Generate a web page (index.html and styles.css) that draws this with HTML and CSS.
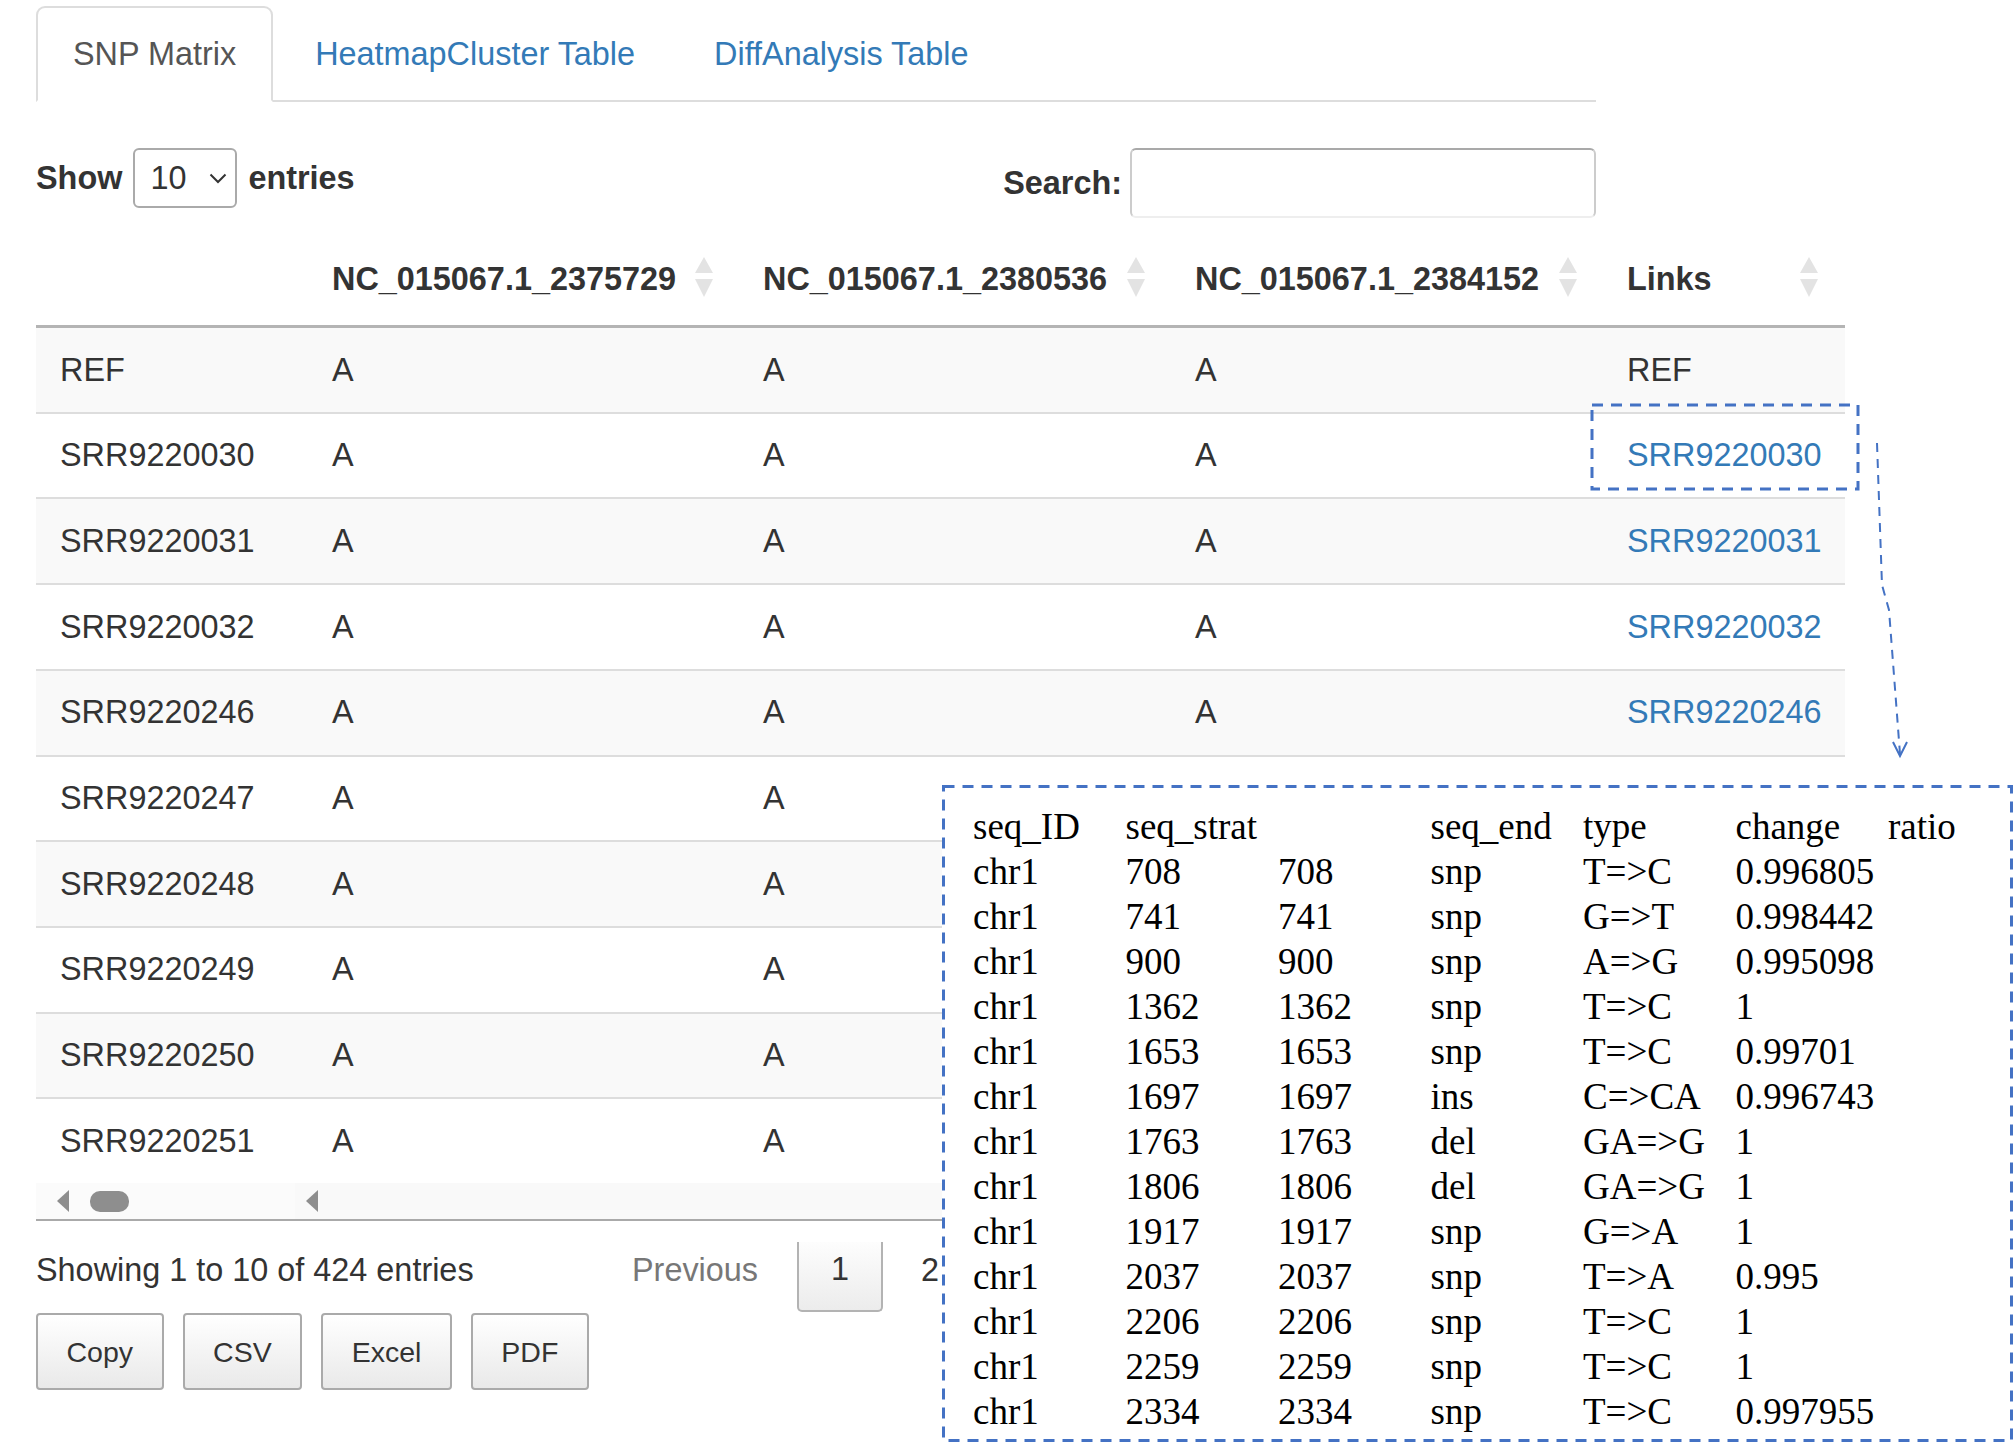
FILE: index.html
```html
<!DOCTYPE html>
<html lang="en">
<head>
<meta charset="utf-8">
<title>SNP Matrix</title>
<link rel="stylesheet" href="styles.css">
</head>
<body>
<div class="page">
  <ul class="nav-tabs">
    <li class="active"><a href="#">SNP Matrix</a></li>
    <li><a href="#">HeatmapCluster Table</a></li>
    <li><a href="#">DiffAnalysis Table</a></li>
  </ul>

  <div class="dt-top">
    <label class="dt-length">Show
      <span class="select"><span>10</span>
        <svg class="chev" width="18" height="11" viewBox="0 0 18 11"><path d="M1.5 1.5 L9 9 L16.5 1.5" fill="none" stroke="#333" stroke-width="2"/></svg>
      </span>
      entries</label>
    <label class="dt-filter">Search:<span class="search"></span></label>
  </div>

  <table class="dt">
    <colgroup>
      <col class="c1"><col class="c2"><col class="c3"><col class="c4"><col class="c5">
    </colgroup>
    <thead>
      <tr>
        <th></th>
        <th class="sorting">NC_015067.1_2375729</th>
        <th class="sorting">NC_015067.1_2380536</th>
        <th class="sorting">NC_015067.1_2384152</th>
        <th class="sorting links">Links</th>
      </tr>
    </thead>
    <tbody>
      <tr><td>REF</td><td>A</td><td>A</td><td>A</td><td>REF</td></tr>
      <tr><td>SRR9220030</td><td>A</td><td>A</td><td>A</td><td><a href="#">SRR9220030</a></td></tr>
      <tr><td>SRR9220031</td><td>A</td><td>A</td><td>A</td><td><a href="#">SRR9220031</a></td></tr>
      <tr><td>SRR9220032</td><td>A</td><td>A</td><td>A</td><td><a href="#">SRR9220032</a></td></tr>
      <tr><td>SRR9220246</td><td>A</td><td>A</td><td>A</td><td><a href="#">SRR9220246</a></td></tr>
      <tr><td>SRR9220247</td><td>A</td><td>A</td><td></td><td></td></tr>
      <tr><td>SRR9220248</td><td>A</td><td>A</td><td></td><td></td></tr>
      <tr><td>SRR9220249</td><td>A</td><td>A</td><td></td><td></td></tr>
      <tr><td>SRR9220250</td><td>A</td><td>A</td><td></td><td></td></tr>
      <tr><td>SRR9220251</td><td>A</td><td>A</td><td></td><td></td></tr>
    </tbody>
  </table>

  <div class="scrollbar">
    <div class="sb-fixed"><span class="sb-arrow"></span><span class="sb-thumb"></span></div>
    <div class="sb-main"><span class="sb-arrow"></span></div>
  </div>

  <div class="dt-bottom">
    <div class="info">Showing 1 to 10 of 424 entries</div>
    <div class="paginate">
      <span class="prev">Previous</span>
      <span class="pg-current">1</span>
      <span class="pg">2</span>
    </div>
  </div>

  <div class="dt-buttons">
    <button class="dt-button">Copy</button>
    <button class="dt-button">CSV</button>
    <button class="dt-button">Excel</button>
    <button class="dt-button">PDF</button>
  </div>

  <div class="popup">
    <div class="prow head">
      <span>seq_ID</span><span class="span2">seq_strat</span><span>seq_end</span><span>type</span><span>change</span><span>ratio</span>
    </div>
    <div class="prow"><span>chr1</span><span>708</span><span>708</span><span>snp</span><span>T=&gt;C</span><span>0.996805</span></div>
    <div class="prow"><span>chr1</span><span>741</span><span>741</span><span>snp</span><span>G=&gt;T</span><span>0.998442</span></div>
    <div class="prow"><span>chr1</span><span>900</span><span>900</span><span>snp</span><span>A=&gt;G</span><span>0.995098</span></div>
    <div class="prow"><span>chr1</span><span>1362</span><span>1362</span><span>snp</span><span>T=&gt;C</span><span>1</span></div>
    <div class="prow"><span>chr1</span><span>1653</span><span>1653</span><span>snp</span><span>T=&gt;C</span><span>0.99701</span></div>
    <div class="prow"><span>chr1</span><span>1697</span><span>1697</span><span>ins</span><span>C=&gt;CA</span><span>0.996743</span></div>
    <div class="prow"><span>chr1</span><span>1763</span><span>1763</span><span>del</span><span>GA=&gt;G</span><span>1</span></div>
    <div class="prow"><span>chr1</span><span>1806</span><span>1806</span><span>del</span><span>GA=&gt;G</span><span>1</span></div>
    <div class="prow"><span>chr1</span><span>1917</span><span>1917</span><span>snp</span><span>G=&gt;A</span><span>1</span></div>
    <div class="prow"><span>chr1</span><span>2037</span><span>2037</span><span>snp</span><span>T=&gt;A</span><span>0.995</span></div>
    <div class="prow"><span>chr1</span><span>2206</span><span>2206</span><span>snp</span><span>T=&gt;C</span><span>1</span></div>
    <div class="prow"><span>chr1</span><span>2259</span><span>2259</span><span>snp</span><span>T=&gt;C</span><span>1</span></div>
    <div class="prow"><span>chr1</span><span>2334</span><span>2334</span><span>snp</span><span>T=&gt;C</span><span>0.997955</span></div>
  </div>

  <svg class="annot" width="2015" height="1444" viewBox="0 0 2015 1444">
    <rect x="1592" y="405" width="266" height="84" fill="none" stroke="#4472c4" stroke-width="3" stroke-dasharray="11 8"/>
    <path d="M1877 443 L1882 585 L1889 610 L1900 754" fill="none" stroke="#4472c4" stroke-width="2" stroke-dasharray="9 7"/>
    <path d="M1893 742 L1900 756 L1907 742" fill="none" stroke="#4472c4" stroke-width="2"/>
    <rect x="943.5" y="786.5" width="1068" height="654" fill="none" stroke="#4472c4" stroke-width="3" stroke-dasharray="11 8"/>
  </svg>
</div>
</body>
</html>
```

FILE: styles.css
```css
* { box-sizing: border-box; }

html, body {
  margin: 0;
  padding: 0;
  background: #fff;
}

body {
  font-family: "Liberation Sans", Arial, Helvetica, sans-serif;
  font-size: 32.4px;
  line-height: 46.3px;
  color: #333;
}

.page {
  position: relative;
  width: 2015px;
  height: 1444px;
  padding: 6px 0 0 36px;
  overflow: hidden;
}

/* ---------- tabs ---------- */
.nav-tabs {
  display: flex;
  list-style: none;
  margin: 0;
  padding: 0;
  width: 1560px;
  border-bottom: 2px solid #ddd;
}
.nav-tabs li { margin-bottom: -2px; }
.nav-tabs a {
  display: block;
  padding: 23px 35px;
  line-height: 46px;
  border: 2px solid transparent;
  border-radius: 9px 9px 0 0;
  margin-right: 5px;
  color: #337ab7;
  text-decoration: none;
}
.nav-tabs li.active a {
  color: #555;
  background: #fff;
  border-color: #ddd;
  border-bottom-color: transparent;
}

/* ---------- length / filter ---------- */
.dt-top {
  display: flex;
  justify-content: space-between;
  align-items: flex-start;
  width: 1560px;
  margin-top: 46px;
}
.dt-length, .dt-filter {
  display: flex;
  align-items: center;
  font-weight: bold;
}
.dt-length { height: 60px; gap: 11px; }
.dt-filter { height: 70px; gap: 8px; }

.select {
  display: flex;
  align-items: center;
  justify-content: space-between;
  width: 104px;
  height: 60px;
  padding: 0 8px 0 15px;
  border: 2px solid #aaa;
  border-radius: 6px;
  font-weight: normal;
  font-size: 32.4px;
  color: #333;
}
.chev { display: block; }

.search {
  display: block;
  width: 466px;
  height: 70px;
  border: 2px solid #ccc;
  border-top-color: #a9a9a9;
  border-bottom-color: #eee;
  border-radius: 6px;
}

/* ---------- table ---------- */
.dt {
  border-collapse: separate;
  border-spacing: 0;
  table-layout: fixed;
  width: 1809px;
  margin-top: 24px;
}
.dt col.c1 { width: 278px; }
.dt col.c2 { width: 431px; }
.dt col.c3 { width: 432px; }
.dt col.c4 { width: 432px; }
.dt col.c5 { width: 236px; }

.dt th {
  position: relative;
  padding: 14px 18px 23px;
  line-height: 46px;
  border-bottom: 3px solid #b4b4b4;
  text-align: left;
  font-weight: bold;
  white-space: nowrap;
}
.dt th.sorting::before,
.dt th.sorting::after {
  content: "";
  position: absolute;
  right: 32px;
  width: 0;
  height: 0;
  border-left: 9px solid transparent;
  border-right: 9px solid transparent;
}
.dt th.sorting::before { top: 15px; border-bottom: 16px solid #e3e3e3; }
.dt th.sorting::after { top: 37px; border-top: 18px solid #e3e3e3; }
.dt th.links::before, .dt th.links::after { right: 27px; }

.dt td {
  padding: 18.5px 18px;
  height: 83.7px;
  line-height: 46.7px;
  border-top: 2px solid #ddd;
  white-space: nowrap;
}
.dt tbody tr + tr td { height: 85.7px; }
.dt tbody tr:first-child td { border-top: 0; }
.dt tbody tr:nth-child(odd) td { background: #f9f9f9; }
.dt th:first-child, .dt td:first-child { padding-left: 24px; }
.dt a { color: #337ab7; text-decoration: none; }

/* ---------- scrollbar ---------- */
.scrollbar {
  display: flex;
  width: 1809px;
  height: 38px;
  background: #f9f9f9;
  border-bottom: 2px solid #aaa;
}
.sb-fixed {
  display: flex;
  align-items: center;
  gap: 21px;
  width: 259px;
  padding-left: 21px;
  background: #fbfbfb;
}
.sb-main {
  display: flex;
  align-items: center;
  flex: 1;
  padding-left: 11px;
}
.sb-arrow {
  width: 0;
  height: 0;
  border-top: 11.5px solid transparent;
  border-bottom: 11.5px solid transparent;
  border-right: 12px solid #8e8e8e;
}
.sb-thumb {
  width: 39px;
  height: 21px;
  border-radius: 10px;
  background: #8e8e8e;
}

/* ---------- info / pagination ---------- */
.dt-bottom {
  display: flex;
  align-items: flex-start;
}
.info {
  width: 596px;
  margin-top: 26px;
  white-space: nowrap;
}
.paginate {
  display: flex;
  align-items: flex-start;
}
.prev {
  margin-top: 26px;
  color: #777;
}
.pg-current {
  margin-top: 21px;
  margin-left: 39px;
  width: 86px;
  height: 70px;
  padding-top: 4px;
  line-height: 46px;
  text-align: center;
  background: linear-gradient(to bottom, #fdfdfd 0%, #ececec 100%);
  border: 2px solid #b3b3b3;
  border-top: 0;
  border-radius: 0 0 5px 5px;
}
.pg {
  margin-top: 26px;
  margin-left: 38px;
}

/* ---------- buttons ---------- */
.dt-buttons {
  display: flex;
  gap: 19px;
  margin-top: 1px;
}
.dt-button {
  font-family: inherit;
  font-size: 28.5px;
  line-height: 46px;
  padding: 13.5px 28.5px;
  color: #333;
  border: 2px solid #aaa;
  border-radius: 4px;
  background: linear-gradient(to bottom, #ffffff 0%, #e9e9e9 100%);
}

/* ---------- popup overlay ---------- */
.popup {
  position: absolute;
  left: 942px;
  top: 785px;
  width: 1071px;
  height: 657px;
  padding: 19px 0 0 31px;
  background: #fff;
  overflow: hidden;
  font-family: "Liberation Serif", "Times New Roman", serif;
  font-size: 37px;
  line-height: 45px;
  color: #000;
}
.prow {
  display: grid;
  grid-template-columns: repeat(6, 152.5px) 1fr;
  height: 45px;
  white-space: nowrap;
}
.prow .span2 { grid-column: span 2; }

.annot {
  position: absolute;
  left: 0;
  top: 0;
  pointer-events: none;
}
```
